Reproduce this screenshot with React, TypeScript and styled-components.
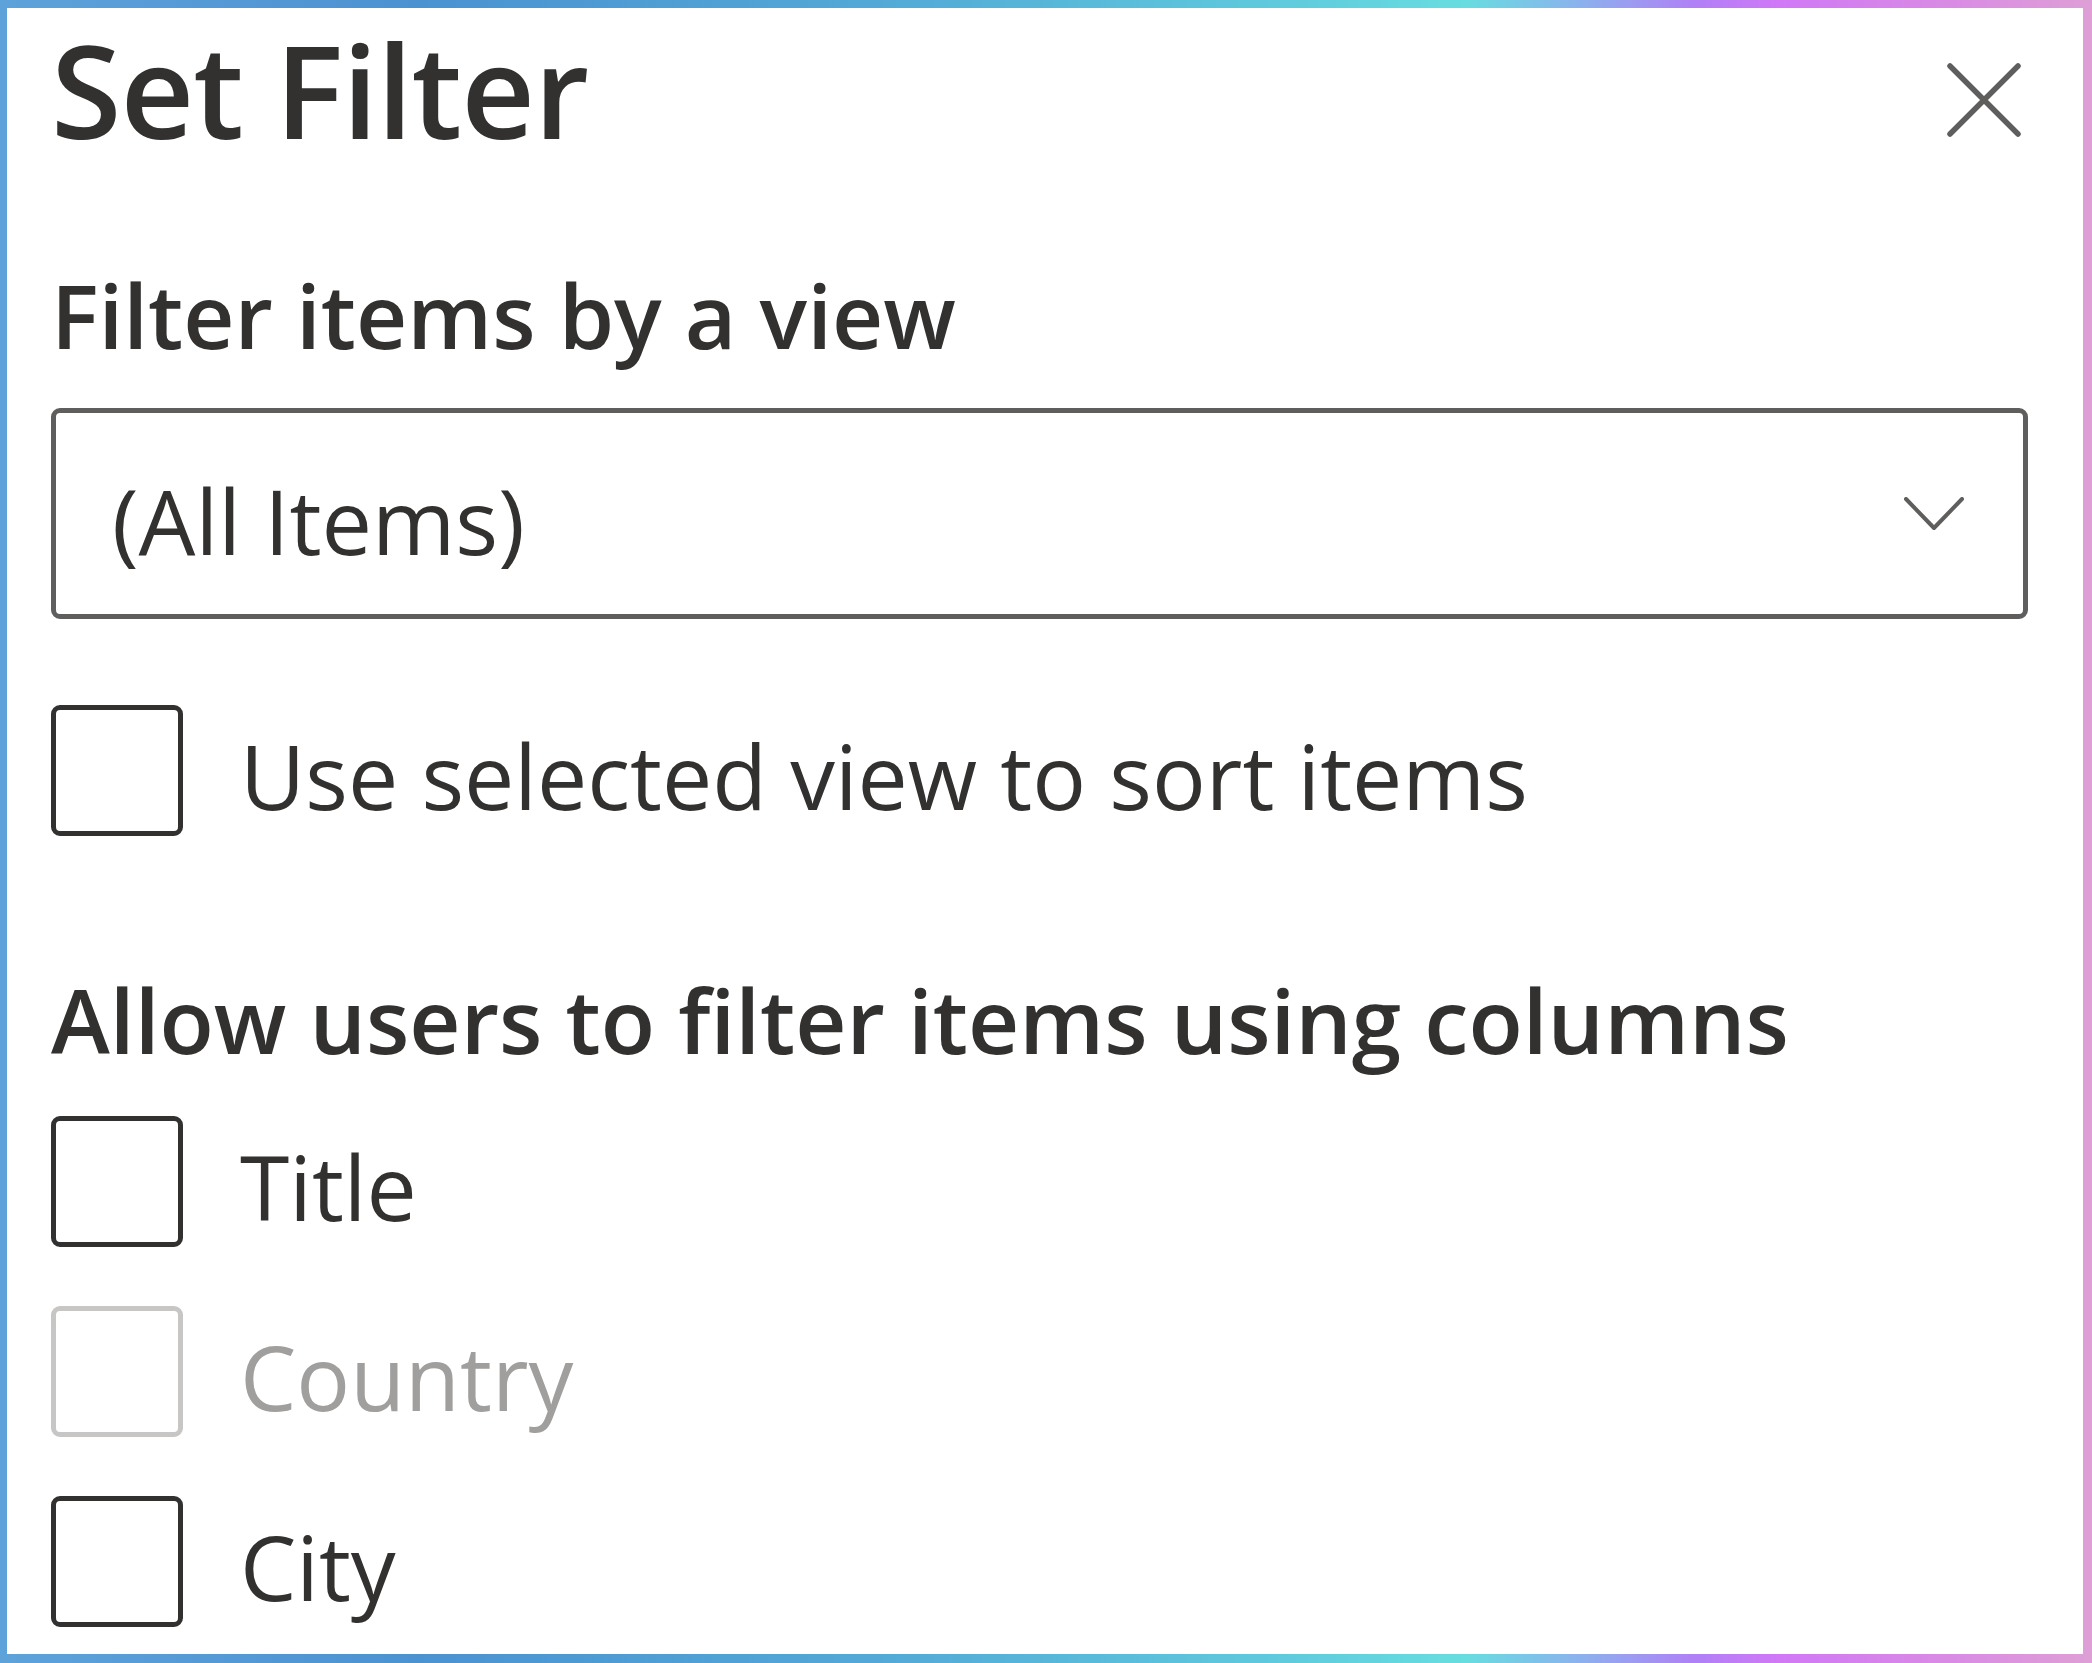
import React from "react";
import styled, { createGlobalStyle } from "styled-components";

const GlobalStyle = createGlobalStyle`
  html, body {
    margin: 0;
    padding: 0;
    background: #ffffff;
  }
  body {
    font-family: "Open Sans", "Noto Sans", "Liberation Sans", sans-serif;
    color: #323130;
  }
  * { box-sizing: border-box; }
`;

const Frame = styled.div`
  width: 2092px;
  height: 1663px;
  padding: 8px 9px 9px 7px;
  background: linear-gradient(
    90deg,
    #5ea2da 0%,
    #4b92d1 20%,
    #52a9d6 42%,
    #5ec8dc 60%,
    #67dde0 70%,
    #88b6ec 75%,
    #b080f6 81%,
    #d078f6 85%,
    #d888e6 92%,
    #de9fd6 100%
  );
`;

const Panel = styled.div`
  height: 100%;
  background: #ffffff;
  padding: 7px 55px 0 44px;
  display: flex;
  flex-direction: column;
`;

const Header = styled.header`
  display: flex;
  justify-content: space-between;
  align-items: flex-start;
  height: 150px;
`;

const Title = styled.h1`
  margin: 0;
  font-size: 128px;
  font-weight: 600;
  line-height: 150px;
  letter-spacing: -1px;
  color: #323130;
`;

const CloseButton = styled.button`
  width: 74px;
  height: 74px;
  margin-top: 48px;
  margin-right: 7px;
  padding: 0;
  border: none;
  background: transparent;
  color: #5f5e5c;
  display: flex;
  cursor: pointer;
`;

const SectionLabel = styled.h2<{ $top: number }>`
  margin: ${(p) => p.$top}px 0 0 0;
  font-size: 89px;
  font-weight: 600;
  line-height: 110px;
  color: #323130;
  white-space: nowrap;
`;

const Dropdown = styled.div`
  margin-top: 38px;
  height: 211px;
  border: 5px solid #605e5c;
  border-radius: 9px;
  display: flex;
  align-items: center;
  justify-content: space-between;
  padding: 12px 59px 0 56px;
`;

const DropdownText = styled.span`
  font-size: 90px;
  line-height: 110px;
  color: #323130;
`;

const Chevron = styled.svg`
  width: 60px;
  height: 34px;
  margin-top: -12px;
  color: #605e5c;
`;

const CheckList = styled.div<{ $top: number }>`
  margin-top: ${(p) => p.$top}px;
  display: flex;
  flex-direction: column;
  gap: 59px;
`;

const CheckRow = styled.label<{ $disabled?: boolean }>`
  display: flex;
  align-items: center;
  gap: 57px;
  height: 131px;
  color: ${(p) => (p.$disabled ? "#a19f9d" : "#323130")};
`;

const Box = styled.span<{ $disabled?: boolean }>`
  width: 132px;
  height: 131px;
  flex: none;
  border: 5px solid ${(p) => (p.$disabled ? "#c8c6c4" : "#323130")};
  border-radius: 9px;
  background: #ffffff;
`;

const CheckText = styled.span`
  font-size: 89.5px;
  line-height: 110px;
  padding-top: 8px;
  white-space: nowrap;
`;

const Check = ({ label, disabled }: { label: string; disabled?: boolean }) => (
  <CheckRow $disabled={disabled}>
    <Box $disabled={disabled} />
    <CheckText>{label}</CheckText>
  </CheckRow>
);

export default function App() {
  return (
    <>
      <GlobalStyle />
      <Frame>
        <Panel>
          <Header>
            <Title>Set Filter</Title>
            <CloseButton aria-label="Close">
              <svg width="74" height="74" viewBox="0 0 74 74">
                <path
                  d="M3 3 L71 71 M71 3 L3 71"
                  stroke="currentColor"
                  strokeWidth="5.5"
                  strokeLinecap="round"
                  fill="none"
                />
              </svg>
            </CloseButton>
          </Header>
          <SectionLabel $top={95}>Filter items by a view</SectionLabel>
          <Dropdown>
            <DropdownText>(All Items)</DropdownText>
            <Chevron viewBox="0 0 60 34">
              <path
                d="M2 2 L30 31 L58 2"
                stroke="currentColor"
                strokeWidth="4"
                strokeLinecap="round"
                strokeLinejoin="round"
                fill="none"
              />
            </Chevron>
          </Dropdown>
          <CheckList $top={86}>
            <Check label="Use selected view to sort items" />
          </CheckList>
          <SectionLabel $top={129}>Allow users to filter items using columns</SectionLabel>
          <CheckList $top={41}>
            <Check label="Title" />
            <Check label="Country" disabled />
            <Check label="City" />
          </CheckList>
        </Panel>
      </Frame>
    </>
  );
}
